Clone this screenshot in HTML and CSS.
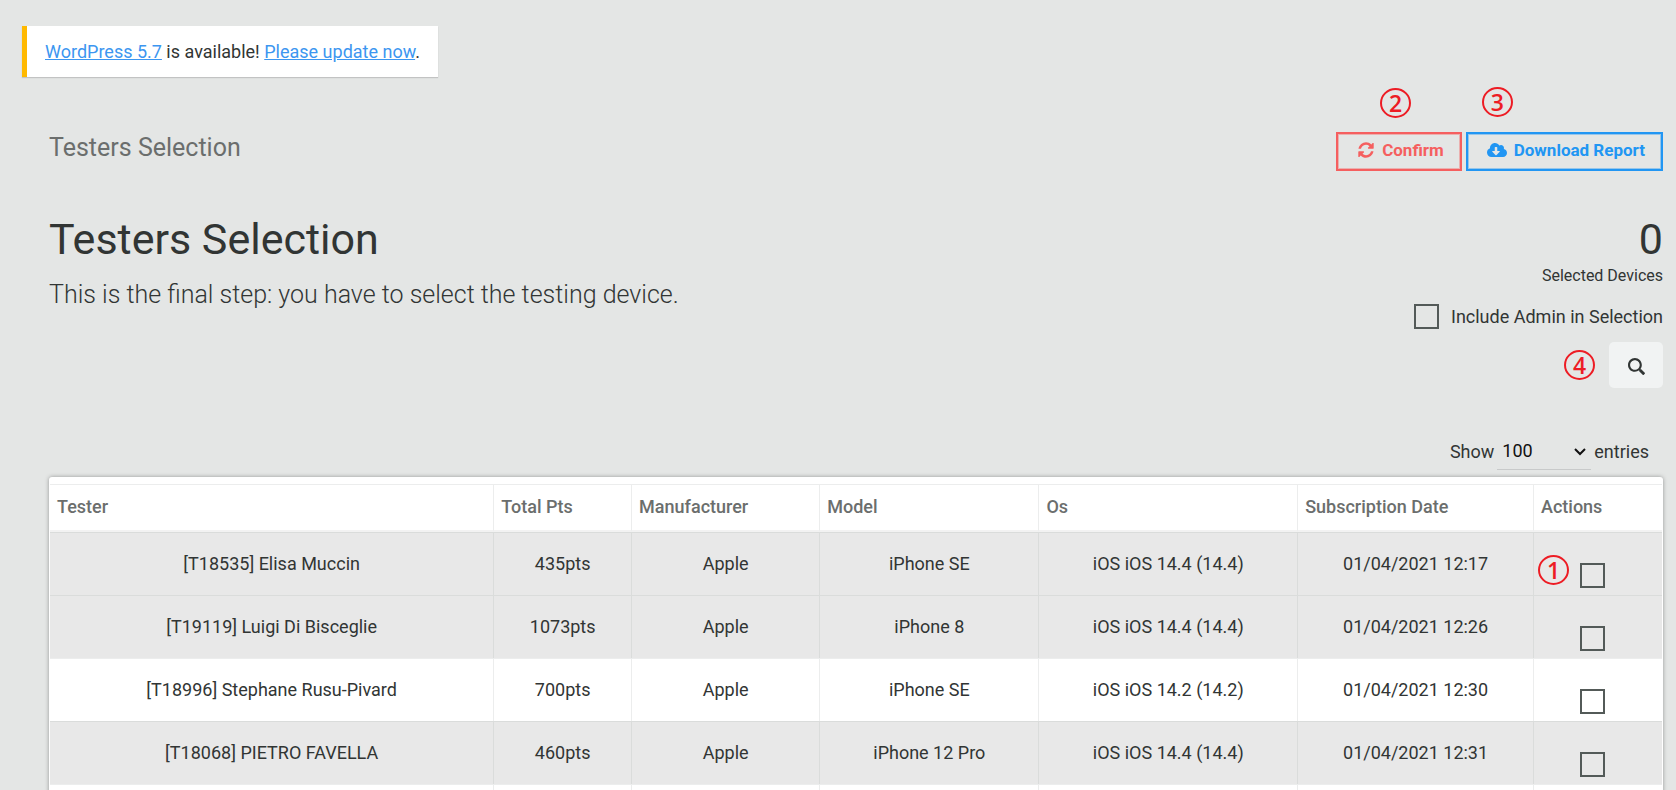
FILE: index.html
```html
<!DOCTYPE html>
<html lang="en">
<head>
  <meta charset="UTF-8">
  <title>Testers Selection</title>
  <link rel="stylesheet" href="styles.css">
</head>
<body>
  <!-- Update notice -->
  <div class="update-nag">
    <a href="#">WordPress 5.7</a> is available! <a href="#">Please update now</a>.
  </div>

  <div class="wrap">
    <div class="topbar">
      <div class="section-title">Testers Selection</div>
      <div class="actions">
        <button type="button" class="btn btn-danger">
          <svg class="icon" viewBox="0 0 1536 1792"><path d="M1511 1056q0 5-1 7-64 268-268 434.500t-478 166.500q-146 0-282.500-55t-243.500-157l-129 129q-19 19-45 19t-45-19-19-45v-448q0-26 19-45t45-19h448q26 0 45 19t19 45-19 45l-137 137q71 66 161 102t187 36q134 0 250-65t186-179q11-17 53-117 8-23 30-23h192q13 0 22.500 9.500t9.500 22.500zm25-800v448q0 26-19 45t-45 19h-448q-26 0-45-19t-19-45 19-45l138-138q-148-137-349-137-134 0-250 65t-186 179q-11 17-53 117-8 23-30 23h-199q-13 0-22.500-9.500t-9.500-22.500v-7q65-268 270-434.500t480-166.500q146 0 284 55.500t245 156.500l130-129q19-19 45-19t45 19 19 45z"/></svg>
          Confirm
          <span class="step step-2">2</span>
        </button>
        <button type="button" class="btn btn-info">
          <svg class="icon icon-wide" viewBox="0 0 640 512"><path d="M537.6 226.600c4.100-10.700 6.400-22.400 6.400-34.600 0-53-43-96-96-96-19.700 0-38.100 6-53.300 16.200C367 64.200 315.300 32 256 32c-88.400 0-160 71.600-160 160 0 2.700.1 5.400.2 8.100C40.200 219.800 0 273.200 0 336c0 79.500 64.500 144 144 144h368c70.700 0 128-57.300 128-128 0-61.900-44-113.600-102.400-125.400zm-132.900 88.700L299.300 420.700c-6.200 6.200-16.400 6.200-22.600 0L171.300 315.300c-10.100-10.100-2.900-27.300 11.300-27.300H248V176c0-8.800 7.200-16 16-16h48c8.800 0 16 7.200 16 16v112h65.400c14.200 0 21.400 17.200 11.300 27.300z"/></svg>
          Download Report
          <span class="step step-3">3</span>
        </button>
      </div>
    </div>

    <div class="intro">
      <div>
        <h1>Testers Selection</h1>
        <p class="lead">This is the final step: you have to select the testing device.</p>
      </div>
      <div class="summary">
        <div class="count">0</div>
        <div class="count-label">Selected Devices</div>
        <label class="include-admin"><input type="checkbox"> Include Admin in Selection</label>
        <div class="search">
          <span class="step step-4">4</span>
          <button type="button" class="search-btn" aria-label="Search">
            <svg class="icon" viewBox="0 0 512 512"><path d="M505 442.700L405.300 343c-4.500-4.500-10.600-7-17-7H372c27.600-35.300 44-79.700 44-128C416 93.100 322.900 0 208 0S0 93.100 0 208s93.100 208 208 208c48.300 0 92.700-16.400 128-44v16.300c0 6.400 2.500 12.500 7 17l99.700 99.700c9.400 9.400 24.600 9.400 33.900 0l28.300-28.300c9.400-9.400 9.400-24.600.1-34zM208 352c-79.500 0-144-64.500-144-144S128.500 64 208 64s144 64.500 144 144-64.500 144-144 144z"/></svg>
          </button>
        </div>
      </div>
    </div>

    <div class="length">
      <label for="entries">Show</label>
      <div class="select">
        <select id="entries">
          <option>10</option>
          <option>50</option>
          <option selected>100</option>
        </select>
        <svg class="chevron" viewBox="0 0 12 8"><path d="M1 1l5 5 5-5"/></svg>
      </div>
      <span>entries</span>
    </div>

    <!-- Testers table -->
    <div class="card">
      <table>
        <colgroup>
          <col class="col-tester"><col class="col-pts"><col class="col-manufacturer"><col class="col-model"><col class="col-os"><col class="col-date"><col class="col-actions">
        </colgroup>
        <thead>
          <tr>
            <th>Tester</th><th>Total Pts</th><th>Manufacturer</th><th>Model</th><th>Os</th><th>Subscription Date</th><th>Actions</th>
          </tr>
        </thead>
        <tbody>
          <tr class="shaded">
            <td>[T18535] Elisa Muccin</td><td>435pts</td><td>Apple</td><td>iPhone SE</td><td>iOS iOS 14.4 (14.4)</td><td>01/04/2021 12:17</td>
            <td class="pick"><span class="step step-1">1</span><input type="checkbox" aria-label="Select T18535"></td>
          </tr>
          <tr class="shaded">
            <td>[T19119] Luigi Di Bisceglie</td><td>1073pts</td><td>Apple</td><td>iPhone 8</td><td>iOS iOS 14.4 (14.4)</td><td>01/04/2021 12:26</td>
            <td class="pick"><input type="checkbox" aria-label="Select T19119"></td>
          </tr>
          <tr>
            <td>[T18996] Stephane Rusu-Pivard</td><td>700pts</td><td>Apple</td><td>iPhone SE</td><td>iOS iOS 14.2 (14.2)</td><td>01/04/2021 12:30</td>
            <td class="pick"><input type="checkbox" aria-label="Select T18996"></td>
          </tr>
          <tr class="shaded">
            <td>[T18068] PIETRO FAVELLA</td><td>460pts</td><td>Apple</td><td>iPhone 12 Pro</td><td>iOS iOS 14.4 (14.4)</td><td>01/04/2021 12:31</td>
            <td class="pick"><input type="checkbox" aria-label="Select T18068"></td>
          </tr>
          <tr>
            <td></td><td></td><td></td><td></td><td></td><td></td><td></td>
          </tr>
        </tbody>
      </table>
    </div>
  </div>
</body>
</html>
```
FILE: styles.css
```css
:root {
  --color-bg: #e4e6e5;
  --color-text: #313534;
  --color-muted: #6b6e6d;
  --color-link: #3c96f0;
  --color-danger: #f55f5f;
  --color-info: #2196f3;
  --color-step: #ed1c24;
  --color-box: #535a58;
}
* { box-sizing: border-box; margin: 0; padding: 0; }
body {
  font-family: Roboto, sans-serif;
  font-size: 18px;
  line-height: 27px;
  background: var(--color-bg);
  color: var(--color-text);
  padding: 26px 13px 0 22px;
}
button, select { font: inherit; color: inherit; }

.update-nag {
  display: inline-block;
  background: #fff;
  border-left: 5px solid #ffb900;
  padding: 12px 18px;
  box-shadow: 0 1px 1px rgba(0,0,0,.15);
}
.update-nag a { color: var(--color-link); }

.wrap { padding-left: 27px; }

/* Top bar */
.topbar {
  display: flex; justify-content: space-between; align-items: flex-start;
  margin-top: 55px;
}
.section-title { font-size: 25px; line-height: 32px; color: var(--color-muted); }
.actions { display: flex; gap: 4px; }
.btn {
  position: relative;
  display: flex; align-items: center; gap: 7px;
  height: 39px; padding: 0 16px 3px 19px;
  background: none; border: 2px solid;
  font-size: 17px; font-weight: 700; cursor: pointer;
}
.btn-danger { color: var(--color-danger); box-shadow: inset 0 0 0 1px rgba(245,95,95,.4); }
.btn-info { color: var(--color-info); box-shadow: inset 0 0 0 1px rgba(33,150,243,.4); }
.icon { width: 18px; height: 18px; fill: currentColor; }
.icon-wide { width: 20px; }

/* Numbered steps */
.step {
  width: 31px; height: 30px;
  border: 2px solid var(--color-step); border-radius: 50%;
  color: var(--color-step);
  font: 600 23px/26px "Open Sans", sans-serif; text-align: center;
}
.step-1, .step-2, .step-3 { position: absolute; }
.step-1 { left: 4px; top: 22px; }
.step-2 { left: 42px; top: -46px; }
.step-3 { left: 14px; top: -47px; }

/* Heading and summary */
.intro {
  display: flex; justify-content: space-between;
  margin-top: 40px;
}
h1, .count { font-size: 43px; line-height: 56px; font-weight: 400; }
.lead { font-size: 25px; line-height: 56px; font-weight: 300; }
.summary { display: flex; flex-direction: column; align-items: flex-end; }
.count-label { font-size: 16px; line-height: 18px; }
.include-admin { display: flex; align-items: center; gap: 12px; margin-top: 18px; }
input[type=checkbox] {
  appearance: none;
  width: 25px; height: 25px;
  border: 2px solid var(--color-box);
}
.search { display: flex; align-items: center; gap: 14px; margin-top: 12px; }
.search-btn {
  width: 54px; height: 46px;
  background: #f1f3f3; border: none; border-radius: 5px;
}
.search-btn .icon { width: 17px; height: 17px; vertical-align: middle; }

.length {
  display: flex; justify-content: flex-end; align-items: center; gap: 3px;
  margin-top: 44px; padding-right: 14px;
}
.select { position: relative; border-bottom: 1px solid #c8caca; }
.select select {
  width: 94px; height: 37px; padding-left: 5px;
  appearance: none; background: none; border: none; color: #111;
}
.chevron {
  position: absolute; right: 5px; top: 16px;
  width: 12px; height: 8px;
  fill: none; stroke: #111; stroke-width: 2;
  pointer-events: none;
}

/* Table */
.card {
  background: #fff;
  border-radius: 3px;
  margin-top: 7px; padding: 7px 1px 0;
  box-shadow: 0 0 4px rgba(0,0,0,.35);
}
table { width: 100%; table-layout: fixed; border-collapse: separate; border-spacing: 0; }
.col-tester { width: 27.56%; }
.col-pts { width: 8.55%; }
.col-manufacturer { width: 11.67%; }
.col-model { width: 13.6%; }
.col-os { width: 16.05%; }
.col-date { width: 14.63%; }
.col-actions { width: 7.94%; }
th {
  height: 48px; padding: 0 7px 2px;
  text-align: left; font-weight: 500; color: var(--color-muted);
  border-top: 1px solid #eceded; border-right: 1px solid #eceded;
  border-bottom: 2px solid #f2f2f2;
}
td {
  height: 63px; padding: 0 8px 2px;
  text-align: center;
  border-top: 1px solid #eceded; border-right: 1px solid #eceded;
}
.shaded td { background: #e8e8e8; border-color: #dadcdb; }
th:last-child, td:last-child { border-right: none; }
.pick { position: relative; vertical-align: bottom; padding: 0 10px 0 0; }
.pick input { display: block; margin: 0 auto 7px; }
```
